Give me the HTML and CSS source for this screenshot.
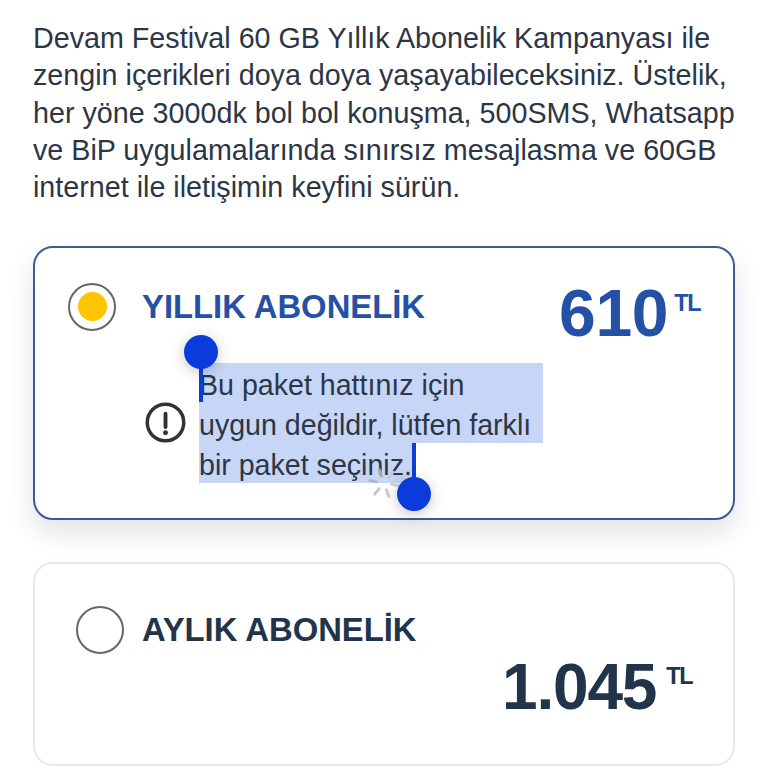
FILE: index.html
```html
<!DOCTYPE html>
<html lang="tr">
<head>
<meta charset="utf-8">
<title>Abonelik</title>
<link rel="stylesheet" href="styles.css">
</head>
<body>
<main class="page">
  <p class="intro">Devam Festival 60 GB Yıllık Abonelik Kampanyası ile<br>zengin içerikleri doya doya yaşayabileceksiniz. Üstelik,<br>her yöne 3000dk bol bol konuşma, 500SMS, Whatsapp<br>ve BiP uygulamalarında sınırsız mesajlasma ve 60GB<br>internet ile iletişimin keyfini sürün.</p>

  <section class="card card-active">
    <div class="card-head">
      <span class="radio radio-on"><span class="radio-dot"></span></span>
      <h2 class="plan-title plan-blue">YILLIK ABONELİK</h2>
      <div class="price price-blue"><span class="amount">610</span><span class="unit">TL</span></div>
    </div>
    <div class="notice">
      <svg class="notice-icon" viewBox="0 0 40 40" aria-hidden="true">
        <circle cx="20" cy="20" r="17.800" fill="none" stroke="#333" stroke-width="3.400"/>
        <path d="M20 11.500v13" fill="none" stroke="#333" stroke-width="3.800" stroke-linecap="round"/>
        <circle cx="20" cy="30" r="2.400" fill="#333"/>
      </svg>
      <div class="selection">
        <div class="sel-line sel-full">Bu paket hattınız için</div>
        <div class="sel-line sel-full">uygun değildir, lütfen farklı</div>
        <div class="sel-line sel-short">bir paket seçiniz.</div>
        <svg class="spinner" viewBox="0 0 40 40" aria-hidden="true">
          <g fill="none" stroke-width="3.600" stroke-linecap="round" transform="rotate(-20 20 20)">
            <path stroke="#a9acb6" d="M20 2v9"/>
            <path stroke="#b4b6be" d="M4.500 11l7.500 4.500"/>
            <path stroke="#c4c5ca" d="M4.500 29l7.500-4.500"/>
            <path stroke="#cbccd0" d="M20 38v-9"/>
            <path stroke="#d2d3d6" d="M35.500 29l-7.500-4.500"/>
            <path stroke="#c6cbd8" d="M35.500 11l-7.500 4.500"/>
          </g>
        </svg>
        <span class="handle handle-start"></span>
        <span class="handle handle-end"></span>
      </div>
    </div>
  </section>

  <section class="card card-plain">
    <div class="card-head head-plain">
      <span class="radio radio-off"></span>
      <h2 class="plan-title">AYLIK ABONELİK</h2>
    </div>
    <div class="price price-dark"><span class="amount">1.045</span><span class="unit">TL</span></div>
  </section>
</main>
</body>
</html>
```

FILE: styles.css
```css
* { box-sizing: border-box; }
html, body { margin: 0; padding: 0; background: #fff; }
body {
  width: 768px;
  height: 768px;
  overflow: hidden;
  font-family: "Liberation Sans", Arial, sans-serif;
  color: #2b3646;
}
.page { padding: 20px 33px 0; }
.intro {
  margin: 0;
  font-size: 28.7px;
  line-height: 37.3px;
  color: #2b3646;
  white-space: nowrap;
}
.card {
  width: 702px;
  background: #fff;
  border-radius: 20px;
}
.card-active {
  height: 274px;
  margin-top: 39.5px;
  border: 2px solid #3c5a98;
  padding: 35px 32px 0 33px;
  box-shadow: 0 12px 26px rgba(40, 50, 80, 0.14);
}
.card-plain {
  height: 204px;
  margin-top: 42px;
  border: 2px solid #e7e8ea;
  padding: 42px 40px 0 41px;
}
.card-head { display: flex; align-items: flex-start; }
.radio {
  flex: none;
  display: flex;
  align-items: center;
  justify-content: center;
  width: 48px;
  height: 48px;
  border: 2px solid #666;
  border-radius: 50%;
}
.radio-dot { width: 29px; height: 29px; border-radius: 50%; background: #fdc500; }
.plan-title {
  margin: 4px 0 0 26px;
  font-size: 32.8px;
  line-height: 40px;
  font-weight: 700;
  color: #22344a;
  white-space: nowrap;
}
.plan-blue { color: #2450a6; }
.head-plain .plan-title { margin-left: 18px; }
.price { display: flex; align-items: flex-start; justify-content: flex-end; }
.price-blue { margin-left: auto; color: #2450a6; margin-top: -8px; }
.price-dark { color: #22344a; margin-top: -5px; }
.amount { font-size: 66px; line-height: 76px; font-weight: 700; letter-spacing: -0.3px; }
.price-dark .amount { font-size: 64px; letter-spacing: -1.2px; }
.unit {
  margin: 16px 0 0 6px;
  font-size: 23.5px;
  line-height: 24px;
  font-weight: 700;
  letter-spacing: -1.5px;
  padding-right: 1px;
}
.price-dark .unit { margin-top: 15px; margin-left: 10px; }
.notice {
  display: flex;
  align-items: center;
  margin: 12px 0 0 77px;
}
.notice-icon { flex: none; width: 41px; height: 41px; }
.selection { position: relative; margin-left: 13px; }
.sel-line {
  height: 40px;
  background: #c7d5f6;
  font-size: 28.6px;
  line-height: 44px;
  color: #2b3646;
  white-space: nowrap;
}
.sel-full { width: 344px; }
.sel-short { width: 215px; }
.handle { position: absolute; width: 3.5px; background: #0d3fd0; }
.handle::before {
  content: "";
  position: absolute;
  left: 50%;
  width: 34px;
  height: 34px;
  margin-left: -17px;
  border-radius: 50%;
  background: #0a3cdb;
  box-shadow: 0 3px 14px rgba(30, 30, 50, 0.25);
}
.handle-start { left: 0; top: 0; height: 39px; }
.handle-start::before { top: -28px; }
.handle-end { left: 213px; top: 80px; height: 36px; }
.handle-end::before { top: 34px; }
.spinner { position: absolute; left: 169px; top: 104px; width: 32px; height: 32px; }
```
